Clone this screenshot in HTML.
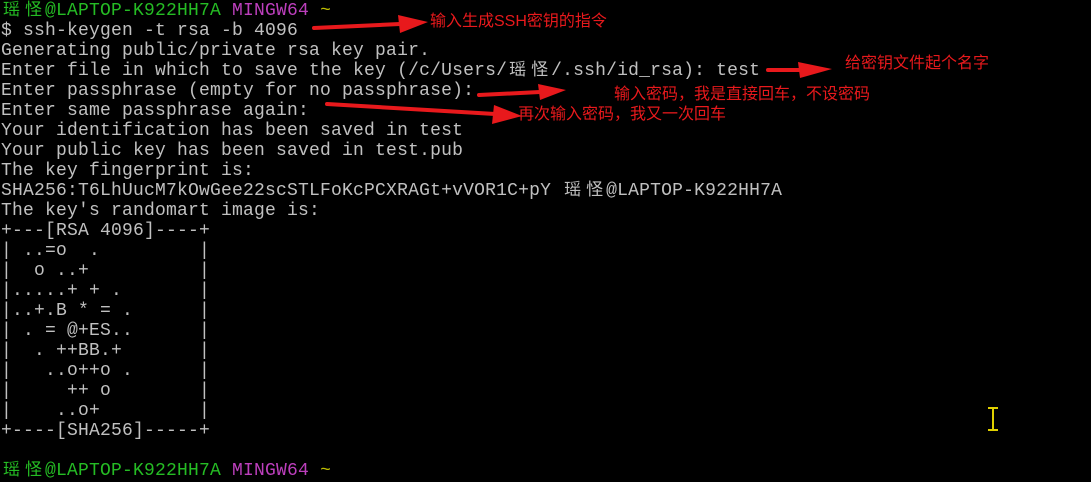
<!DOCTYPE html>
<html><head><meta charset="utf-8"><style>
html,body{margin:0;padding:0;background:#000;width:1091px;height:482px;overflow:hidden;position:relative}
#t{position:absolute;left:1px;top:1px;font-family:"Liberation Mono",monospace;font-size:18px;letter-spacing:0.2px;color:#c0c0c0}
#t div{height:20px;line-height:20px;white-space:pre;overflow:visible}
.g{color:#25bc24}.p{color:#bc3fbc}.y{color:#bcbc00}
.c{display:inline-block;width:22px;height:1px;position:relative}
.c i{position:absolute;left:2px;bottom:-1px;font-style:normal;line-height:17px;font-family:"Noto Sans CJK SC",sans-serif;font-size:17px;letter-spacing:0}
.a{position:absolute;color:#e8191c;font-family:"Liberation Sans","Noto Sans CJK SC",sans-serif;font-size:16px;white-space:nowrap;line-height:20px}
svg{position:absolute;left:0;top:0}
</style></head><body>
<div id="t">
<div><span class="g"><span class="c"><i>瑶</i></span><span class="c"><i>怪</i></span>@LAPTOP-K922HH7A</span> <span class="p">MINGW64</span> <span class="y">~</span></div>
<div>$ ssh-keygen -t rsa -b 4096</div>
<div>Generating public/private rsa key pair.</div>
<div>Enter file in which to save the key (/c/Users/<span class="c"><i>瑶</i></span><span class="c"><i>怪</i></span>/.ssh/id_rsa): test</div>
<div>Enter passphrase (empty for no passphrase):</div>
<div>Enter same passphrase again:</div>
<div>Your identification has been saved in test</div>
<div>Your public key has been saved in test.pub</div>
<div>The key fingerprint is:</div>
<div>SHA256:T6LhUucM7kOwGee22scSTLFoKcPCXRAGt+vVOR1C+pY <span class="c"><i>瑶</i></span><span class="c"><i>怪</i></span>@LAPTOP-K922HH7A</div>
<div>The key's randomart image is:</div>
<div>+---[RSA 4096]----+</div>
<div>| ..=o  .         |</div>
<div>|  o ..+          |</div>
<div>|.....+ + .       |</div>
<div>|..+.B * = .      |</div>
<div>| . = @+ES..      |</div>
<div>|  . ++BB.+       |</div>
<div>|   ..o++o .      |</div>
<div>|     ++ o        |</div>
<div>|    ..o+         |</div>
<div>+----[SHA256]-----+</div>
<div> </div>
<div><span class="g"><span class="c"><i>瑶</i></span><span class="c"><i>怪</i></span>@LAPTOP-K922HH7A</span> <span class="p">MINGW64</span> <span class="y">~</span></div>
</div>
<svg width="1091" height="482">
<g fill="#e8191c" stroke="#e8191c" stroke-linecap="round">
<line x1="314" y1="28" x2="400" y2="24" stroke-width="4"/>
<polygon points="398,15 428,22 400,33" stroke="none"/>
<line x1="768" y1="70" x2="800" y2="70" stroke-width="4"/>
<polygon points="798,62 832,69 800,78" stroke="none"/>
<line x1="479" y1="95" x2="540" y2="92" stroke-width="4"/>
<polygon points="538,84 566,90 540,100" stroke="none"/>
<line x1="327" y1="104" x2="495" y2="114" stroke-width="4"/>
<polygon points="494,105 522,116 492,124" stroke="none"/>
</g>
<g stroke="#e0d000" stroke-width="2" fill="none">
<line x1="993" y1="408" x2="993" y2="430"/>
<line x1="988" y1="408" x2="998" y2="408"/>
<line x1="988" y1="430" x2="998" y2="430"/>
</g>
</svg>
<div class="a" style="left:430px;top:12px">输入生成SSH密钥的指令</div>
<div class="a" style="left:845px;top:54px">给密钥文件起个名字</div>
<div class="a" style="left:614px;top:85px">输入密码，我是直接回车，不设密码</div>
<div class="a" style="left:518px;top:105px">再次输入密码，我又一次回车</div>
</body></html>
